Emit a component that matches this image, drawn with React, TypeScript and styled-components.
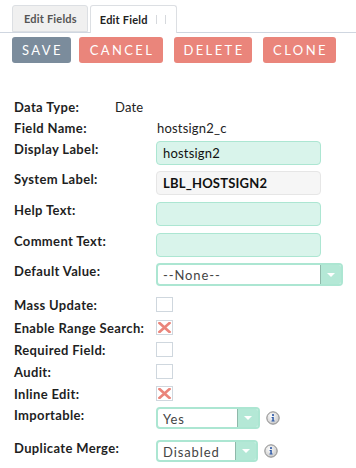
import React from 'react';
import styled, { createGlobalStyle } from 'styled-components';

const GlobalStyle = createGlobalStyle`
  html, body {
    margin: 0;
    padding: 0;
    background: #ffffff;
    font-family: Lato, 'Open Sans', Arial, sans-serif;
  }
`;

const mint = '#d9f4eb';
const mintBorder = '#ace6d2';
const salmon = '#ea857b';

const Page = styled.div`
  width: 356px;
  height: 468px;
  overflow: hidden;
  box-sizing: border-box;
`;

const TabBar = styled.div`
  display: flex;
  align-items: flex-end;
  margin-top: 5px;
  padding-left: 12px;
  border-bottom: 1px solid #cfd6e0;
  height: 27px;
`;

const Tab = styled.div<{ $active?: boolean }>`
  display: flex;
  align-items: center;
  box-sizing: border-box;
  height: ${({ $active }) => ($active ? '28px' : '27px')};
  margin-bottom: ${({ $active }) => ($active ? '-1px' : '0')};
  padding: 0 10px 0 ${({ $active }) => ($active ? '9px' : '11px')};
  margin-right: 2px;
  border: 1px solid #dcdfe3;
  border-bottom: ${({ $active }) => ($active ? 'none' : '1px solid #dcdfe3')};
  border-radius: 3px 3px 0 0;
  background: ${({ $active }) => ($active ? '#ffffff' : '#f0f0f0')};
  color: ${({ $active }) => ($active ? '#222222' : '#555555')};
  font-size: 11px;
  font-weight: 700;
  letter-spacing: 0.2px;
`;

const TabDivider = styled.span`
  display: inline-block;
  width: 1px;
  height: 9px;
  background: #d6d9dd;
  margin-left: 8px;
`;

const Toolbar = styled.div`
  display: flex;
  padding-left: 12px;
  margin-top: 4px;
`;

const ActionButton = styled.div<{ $tone: 'gray' | 'red'; $w: number; $ml: number }>`
  display: flex;
  align-items: center;
  justify-content: center;
  box-sizing: border-box;
  width: ${({ $w }) => $w}px;
  height: 26px;
  margin-left: ${({ $ml }) => $ml}px;
  border-radius: 3px;
  background: ${({ $tone }) => ($tone === 'gray' ? '#7b8c9c' : salmon)};
  color: #ffffff;
  font-size: 13px;
  letter-spacing: 2.4px;
  padding-left: 2px;
  text-transform: uppercase;
`;

const Form = styled.div`
  display: flex;
  flex-direction: column;
  margin-top: 36px;
  padding-left: 14px;
`;

const Row = styled.div<{ $h: number; $labelW?: number }>`
  display: grid;
  grid-template-columns: ${({ $labelW }) => $labelW ?? 142}px 1fr;
  align-items: start;
  height: ${({ $h }) => $h}px;
`;

const Label = styled.div`
  font-size: 13px;
  line-height: 16px;
  font-weight: 700;
  color: #1f1f1f;
  letter-spacing: 0.35px;
  white-space: nowrap;
`;

const Value = styled.div`
  font-size: 13px;
  line-height: 16px;
  color: #222222;
  letter-spacing: 0.2px;
  padding-left: 1px;
`;

const TextBox = styled.div<{ $disabled?: boolean }>`
  box-sizing: border-box;
  width: 165px;
  height: 24px;
  display: flex;
  align-items: center;
  padding-left: 6px;
  border: 1px solid ${({ $disabled }) => ($disabled ? '#e6e6e6' : mintBorder)};
  border-radius: 4px;
  background: ${({ $disabled }) => ($disabled ? '#f6f6f6' : mint)};
  font-size: 13px;
  font-weight: ${({ $disabled }) => ($disabled ? 700 : 400)};
  letter-spacing: 0.2px;
  color: #111111;
`;

const SelectWrap = styled.div`
  display: flex;
  align-items: center;
  gap: 6px;
`;

const Select = styled.div<{ $w: number; $h: number }>`
  box-sizing: border-box;
  width: ${({ $w }) => $w}px;
  height: ${({ $h }) => $h}px;
  display: flex;
  border: 2px solid ${mintBorder};
  border-radius: 4px;
  background: #ffffff;
  overflow: hidden;
`;

const SelectText = styled.div`
  flex: 1;
  display: flex;
  align-items: center;
  padding-left: 5px;
  padding-top: 1px;
  font-size: 13px;
  letter-spacing: 0.9px;
  color: #444444;
`;

const SelectArrow = styled.div`
  width: 20px;
  display: flex;
  align-items: center;
  justify-content: center;
  background: #b4e8d6;
  border-left: 1px solid #8fb8aa;
`;

const Caret = styled.div`
  width: 0;
  height: 0;
  border-left: 4px solid transparent;
  border-right: 4px solid transparent;
  border-top: 4px solid #ffffff;
`;

const Checkbox = styled.div`
  box-sizing: border-box;
  width: 17px;
  height: 15px;
  border: 1px solid #cfd7de;
  background: #ffffff;
  display: flex;
  align-items: center;
  justify-content: center;
`;

const CrossMark = () => (
  <svg width="13" height="11" viewBox="0 0 13 11">
    <path d="M1.5 1 L11.5 10 M11.5 1 L1.5 10" stroke={salmon} strokeWidth="2.6" strokeLinecap="square" />
  </svg>
);

const InfoIcon = () => (
  <svg width="14" height="14" viewBox="0 0 14 14">
    <defs>
      <radialGradient id="ig" cx="0.4" cy="0.35" r="0.7">
        <stop offset="0" stopColor="#ffffff" />
        <stop offset="1" stopColor="#c4c4c4" />
      </radialGradient>
    </defs>
    <circle cx="7" cy="7" r="6.2" fill="url(#ig)" stroke="#8a8a8a" strokeWidth="1" />
    <circle cx="7" cy="4.1" r="1.1" fill="#2f5aa8" />
    <path d="M5.6 6 H7.8 V9.6 H8.6 V10.6 H5.5 V9.6 H6.3 V7 H5.6 Z" fill="#2f5aa8" />
  </svg>
);

type BoxRow = { label: string; h: number; checked: boolean };

const checkRows: BoxRow[] = [
  { label: 'Mass Update:', h: 23, checked: false },
  { label: 'Enable Range Search:', h: 22, checked: true },
  { label: 'Required Field:', h: 22, checked: false },
  { label: 'Audit:', h: 22, checked: false },
  { label: 'Inline Edit:', h: 21, checked: true },
];

export default function App() {
  return (
    <Page>
      <GlobalStyle />
      <TabBar>
        <Tab>Edit Fields</Tab>
        <Tab $active>
          Edit Field
          <TabDivider />
          <TabDivider />
        </Tab>
      </TabBar>

      <Toolbar>
        <ActionButton $tone="gray" $w={59} $ml={0}>Save</ActionButton>
        <ActionButton $tone="red" $w={84} $ml={8}>Cancel</ActionButton>
        <ActionButton $tone="red" $w={78} $ml={11}>Delete</ActionButton>
        <ActionButton $tone="red" $w={73} $ml={11}>Clone</ActionButton>
      </Toolbar>

      <Form>
        <Row $h={21} $labelW={100}>
          <Label>Data Type:</Label>
          <Value>Date</Value>
        </Row>
        <Row $h={21}>
          <Label>Field Name:</Label>
          <Value>hostsign2_c</Value>
        </Row>
        <Row $h={30}>
          <Label>Display Label:</Label>
          <TextBox>hostsign2</TextBox>
        </Row>
        <Row $h={31}>
          <Label>System Label:</Label>
          <TextBox $disabled>LBL_HOSTSIGN2</TextBox>
        </Row>
        <Row $h={31}>
          <Label>Help Text:</Label>
          <TextBox />
        </Row>
        <Row $h={30}>
          <Label>Comment Text:</Label>
          <TextBox />
        </Row>
        <Row $h={34}>
          <Label>Default Value:</Label>
          <Select $w={187} $h={23}>
            <SelectText>--None--</SelectText>
            <SelectArrow><Caret /></SelectArrow>
          </Select>
        </Row>
        {checkRows.map((r) => (
          <Row key={r.label} $h={r.h}>
            <Label>{r.label}</Label>
            <Checkbox>{r.checked && <CrossMark />}</Checkbox>
          </Row>
        ))}
        <Row $h={33}>
          <Label>Importable:</Label>
          <SelectWrap>
            <Select $w={104} $h={22}>
              <SelectText>Yes</SelectText>
              <SelectArrow><Caret /></SelectArrow>
            </Select>
            <InfoIcon />
          </SelectWrap>
        </Row>
        <Row $h={27}>
          <Label>Duplicate Merge:</Label>
          <SelectWrap>
            <Select $w={102} $h={22}>
              <SelectText>Disabled</SelectText>
              <SelectArrow><Caret /></SelectArrow>
            </Select>
            <InfoIcon />
          </SelectWrap>
        </Row>
      </Form>
    </Page>
  );
}
